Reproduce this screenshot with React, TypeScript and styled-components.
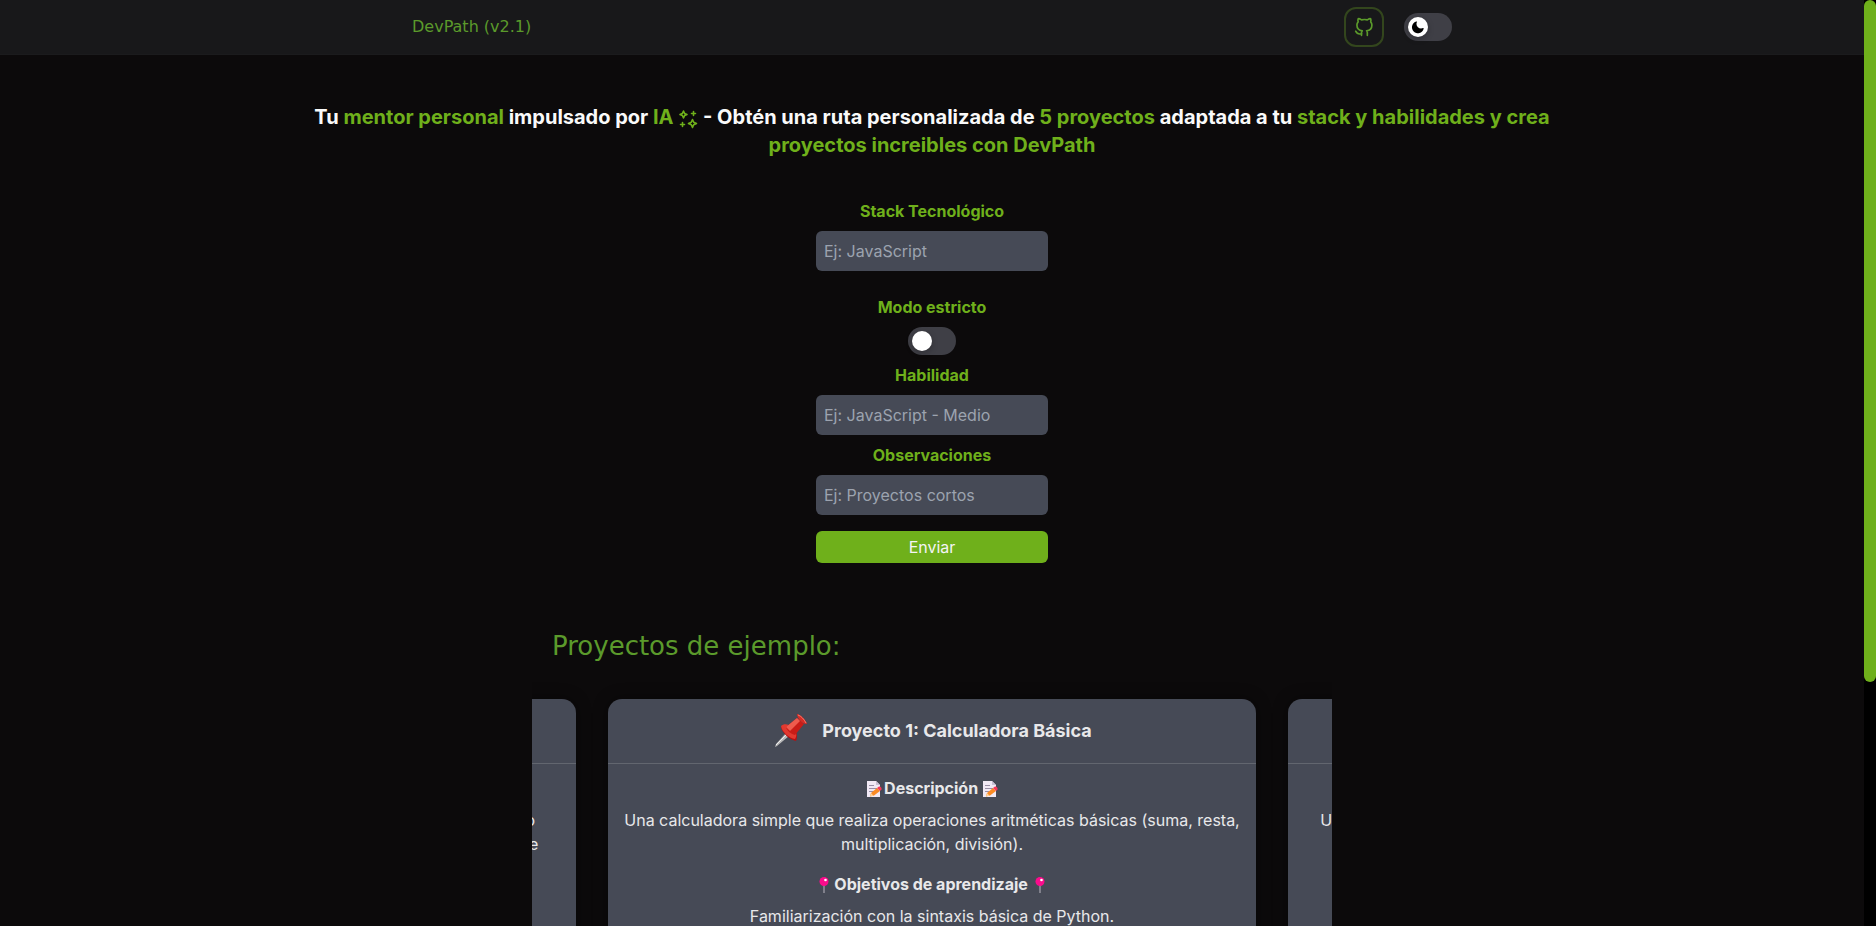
import React from "react";
import styled, { createGlobalStyle } from "styled-components";

const green = "#6fb01b";
const brand = "#5b9a2b";
const slate = "#464a56";

const Global = createGlobalStyle`
  *, *::before, *::after { box-sizing: border-box; }
  html { background: #0c0a0b; }
  body {
    margin: 0;
    height: 100vh;
    background: #0c0a0b;
    color: #fafafa;
    font-family: Inter, "Liberation Sans", sans-serif;
    font-size: 16px;
    line-height: 24px;
  }
  h1, h2, h3, h4, p { margin: 0; }
  button, input { font: inherit; }
`;

const Shell = styled.div`
  display: flex;
  height: 100vh;
  overflow: hidden;
`;

const Page = styled.div`
  flex: 1;
  min-width: 0;
  overflow: hidden;
`;

const ScrollTrack = styled.div`
  flex: none;
  width: 12px;
  background: #000;
`;

const ScrollThumb = styled.div`
  height: 73.6%;
  border-radius: 6px;
  background: ${green};
`;

const Header = styled.header`
  background: #18181a;
  border-bottom: 1px solid #1b1b1d;
`;

const Bar = styled.div`
  display: flex;
  align-items: center;
  justify-content: space-between;
  height: 54px;
  max-width: 1040px;
  margin: 0 auto;
`;

const Brand = styled.a`
  color: ${brand};
  font-family: "DejaVu Sans", sans-serif;
  font-size: 16px;
  font-weight: 400;
  text-decoration: none;
`;

const Actions = styled.div`
  display: flex;
  align-items: center;
  gap: 20px;
`;

const IconLink = styled.a`
  display: flex;
  align-items: center;
  justify-content: center;
  width: 40px;
  height: 40px;
  border: 2px solid #33461d;
  border-radius: 12px;
  color: ${brand};
`;

const Toggle = styled.label`
  display: flex;
  align-items: center;
  width: 48px;
  height: 28px;
  padding: 0 4px;
  border-radius: 14px;
  background: #3f3f46;
  cursor: pointer;

  input {
    position: absolute;
    opacity: 0;
    width: 1px;
    height: 1px;
    margin: 0;
  }
`;

const Knob = styled.span`
  display: flex;
  align-items: center;
  justify-content: center;
  width: 20px;
  height: 20px;
  border-radius: 50%;
  background: #fff;
  color: #000;
  box-shadow: 0 2px 6px rgba(0, 0, 0, 0.25);

  input:checked + & {
    margin-left: auto;
  }
`;

const Main = styled.main`
  display: flex;
  flex-direction: column;
  align-items: center;
`;

const Headline = styled.h1`
  max-width: 1280px;
  padding: 48px 16px 0;
  text-align: center;
  font-size: 20px;
  line-height: 28px;
  font-weight: 700;

  em {
    color: ${green};
    font-style: normal;
  }

  svg {
    vertical-align: -5px;
  }
`;

const Form = styled.form`
  display: flex;
  flex-direction: column;
  align-items: center;
  width: 232px;
  padding-top: 40px;
`;

const Field = styled.div<{ $after?: number }>`
  display: flex;
  flex-direction: column;
  align-items: center;
  gap: 8px;
  width: 100%;
  margin-bottom: ${(p) => p.$after ?? 8}px;
`;

const Label = styled.label`
  color: ${green};
  font-weight: 700;
`;

const Input = styled.input`
  width: 100%;
  height: 40px;
  padding: 0 8px;
  border: 0;
  border-radius: 6px;
  background: ${slate};
  color: #fafafa;

  &::placeholder {
    color: #9ca3af;
    opacity: 1;
  }
`;

const Submit = styled.button`
  width: 100%;
  height: 32px;
  padding: 0;
  border: 0;
  border-radius: 6px;
  background: ${green};
  color: #f4f4f5;
`;

const Examples = styled.section`
  width: 800px;
  max-width: 100%;
  padding-top: 64px;
`;

const SectionTitle = styled.h2`
  padding: 0 20px;
  color: ${brand};
  font-family: "DejaVu Sans", sans-serif;
  font-size: 26px;
  line-height: 38px;
  font-weight: 400;
`;

const Carousel = styled.div`
  display: flex;
  justify-content: center;
  gap: 32px;
  padding-top: 34px;
  overflow: hidden;
`;

const Card = styled.article`
  flex: none;
  width: 648px;
  min-height: 420px;
  border-radius: 14px;
  background: ${slate};
  color: #e8e8ea;
  text-align: center;
  box-shadow: 0 0 15px rgba(0, 0, 0, 0.4);
`;

const CardHeader = styled.header`
  display: flex;
  align-items: center;
  justify-content: center;
  gap: 14px;
  height: 65px;
  border-bottom: 1px solid #62666f;
`;

const CardTitle = styled.h3`
  font-size: 18px;
  line-height: 28px;
  font-weight: 700;
`;

const CardBody = styled.div`
  display: flex;
  flex-direction: column;
  gap: 8px;
  padding: 12px;
`;

const Heading = styled.h4<{ $spaced?: boolean }>`
  font-size: 16px;
  font-weight: 700;
  padding-top: ${(p) => (p.$spaced ? 8 : 0)}px;

  svg {
    vertical-align: -3px;
  }

  svg:first-child {
    margin-right: 2px;
  }
`;

function Github() {
  return (
    <svg width="20" height="20" viewBox="0 0 24 24" fill="none" stroke="currentColor" strokeWidth="2" strokeLinecap="round" strokeLinejoin="round" aria-hidden="true">
      <path d="M16 22.030V19.160C16.040 18.680 15.970 18.200 15.810 17.750 15.650 17.300 15.390 16.890 15.060 16.550 18.200 16.200 21.500 15.010 21.500 9.550 21.500 8.150 20.960 6.810 20 5.800 20.460 4.580 20.420 3.230 19.910 2.030 19.910 2.030 18.730 1.680 16 3.510 13.710 2.890 11.290 2.890 9 3.510 6.270 1.680 5.090 2.030 5.090 2.030 4.580 3.230 4.540 4.580 5 5.800 4.030 6.820 3.490 8.170 3.500 9.580 3.500 15 6.800 16.190 9.940 16.580 9.610 16.920 9.360 17.320 9.200 17.770 9.030 18.210 8.970 18.680 9 19.160V22.030" />
      <path d="M9 20.030C6 21 3.500 20.030 2 17.030" />
    </svg>
  );
}

function Moon() {
  return (
    <svg width="14" height="14" viewBox="0 0 24 24" fill="currentColor" aria-hidden="true">
      <path d="M21.500 14.100a.7.7 0 0 0-.800-.2 8 8 0 0 1-10.600-10.400.7.7 0 0 0-.900-1A10.200 10.200 0 1 0 21.700 15a.7.7 0 0 0-.2-.9z" />
    </svg>
  );
}

function Sparkles() {
  return (
    <svg width="20" height="20" viewBox="0 0 20 20" fill="none" stroke={green} strokeWidth="1.600" strokeLinejoin="round" strokeLinecap="round" aria-hidden="true">
      <path d="M5.500 2 6.600 4.400 9 5.500 6.600 6.600 5.500 9 4.400 6.600 2 5.500 4.400 4.400z" />
      <path d="M14.500 10.500 15.700 13.300 18.500 14.500 15.700 15.700 14.500 18.500 13.300 15.700 10.500 14.500 13.300 13.300z" />
      <path d="M15.500 2.500v4M13.500 4.500h4M4.500 13.500v4M2.500 15.500h4" />
    </svg>
  );
}

function Pushpin() {
  return (
    <svg width="36" height="36" viewBox="0 0 36 36" aria-hidden="true">
      <path d="M3 34 4 31 14 20 17 23 5 33z" fill="#b9b9b9" />
      <path d="M4 32 15 21" stroke="#eee" strokeWidth="1" />
      <path d="M9 14c4-3 9-2 12 1 4 3 5 8 3 13-6-1-14-8-15-14z" fill="#b80f12" />
      <path d="M9 13c3-3 8-2 12 2s4 8 2 11c-6-1-13-7-14-13z" fill="#e2392f" />
      <path d="M14 14 25 5 32 11 23 22c-4-1-8-4-9-8z" fill="#c91c17" />
      <path d="M14 14 25 5 28 8 18 18z" fill="#ee5b4d" />
      <path d="M25 1c3 0 9 6 10 10-3 1-10-5-10-10z" fill="#d92b24" />
      <path d="M26 2c3 1 6 4 8 8" stroke="#f27a6d" strokeWidth="1" fill="none" />
    </svg>
  );
}

function Memo() {
  return (
    <svg width="16" height="16" viewBox="0 0 16 16" aria-hidden="true">
      <path d="M1 0h9l4 4v12H1z" fill="#f1e9f5" />
      <path d="M10 0v4h4z" fill="#c9bfd4" />
      <path d="M3 4.500h5M3 7.500h8M3 10.500h5" stroke="#998ea6" strokeWidth="1" />
      <path d="M4 15.500 5 12 11 7 14 10 8 14.500z" fill="#fb8b24" />
      <path d="M4 15.500 5 12 7.500 14.800z" fill="#ffd29b" />
      <path d="M11 7 13 5.500C14.500 5 16 7 15.500 8.500L14 10z" fill="#f8385c" />
    </svg>
  );
}

function RoundPin() {
  return (
    <svg width="16" height="16" viewBox="0 0 16 16" aria-hidden="true">
      <path d="M7.500 8h1v8h-1z" fill="#b9b6bf" />
      <circle cx="8" cy="4.500" r="4.500" fill="#fb0b8c" />
      <circle cx="9.500" cy="3" r="1.300" fill="#fff" />
    </svg>
  );
}

type Project = { title: string; description: string; goals: string };

const projects: Project[] = [
  {
    title: "Proyecto 3: Lista de Tareas",
    description:
      "Una aplicación de consola que permite agregar y marcar tareas guardando automáticamente la lista en un archivo de texto local que después se puede recuperar.",
    goals: "Manejo de archivos y listas en Python.",
  },
  {
    title: "Proyecto 1: Calculadora Básica",
    description:
      "Una calculadora simple que realiza operaciones aritméticas básicas (suma, resta, multiplicación, división).",
    goals: "Familiarización con la sintaxis básica de Python.",
  },
  {
    title: "Proyecto 2: Adivina el Número",
    description: "Un juego donde cada usuario intenta adivinar un número generado al azar en Python.",
    goals: "Uso de bucles y condicionales.",
  },
];

function ProjectCard({ project }: { project: Project }) {
  return (
    <Card>
      <CardHeader>
        <Pushpin />
        <CardTitle>{project.title}</CardTitle>
      </CardHeader>
      <CardBody>
        <Heading><Memo />Descripción <Memo /></Heading>
        <p>{project.description}</p>
        <Heading $spaced><RoundPin />Objetivos de aprendizaje <RoundPin /></Heading>
        <p>{project.goals}</p>
      </CardBody>
    </Card>
  );
}

export default function App() {
  return (
    <>
      <Global />
      <Shell>
        <Page>
          <Header>
            <Bar>
              <Brand href="#">DevPath (v2.1)</Brand>
              <Actions>
                <IconLink href="#" aria-label="GitHub"><Github /></IconLink>
                <Toggle>
                  <input type="checkbox" role="switch" aria-label="Tema" />
                  <Knob><Moon /></Knob>
                </Toggle>
              </Actions>
            </Bar>
          </Header>
          <Main>
            <Headline>
              Tu <em>mentor personal</em> impulsado por <em>IA <Sparkles /></em> - Obtén una ruta
              personalizada de <em>5 proyectos</em> adaptada a tu{" "}
              <em>stack y habilidades y crea proyectos increibles con DevPath</em>
            </Headline>
            <Form onSubmit={(e) => e.preventDefault()}>
              <Field $after={24}>
                <Label htmlFor="stack">Stack Tecnológico</Label>
                <Input id="stack" placeholder="Ej: JavaScript" />
              </Field>
              <Field>
                <Label htmlFor="strict">Modo estricto</Label>
                <Toggle>
                  <input id="strict" type="checkbox" role="switch" />
                  <Knob />
                </Toggle>
              </Field>
              <Field>
                <Label htmlFor="skill">Habilidad</Label>
                <Input id="skill" placeholder="Ej: JavaScript - Medio" />
              </Field>
              <Field $after={16}>
                <Label htmlFor="notes">Observaciones</Label>
                <Input id="notes" placeholder="Ej: Proyectos cortos" />
              </Field>
              <Submit type="submit">Enviar</Submit>
            </Form>
            <Examples>
              <SectionTitle>Proyectos de ejemplo:</SectionTitle>
              <Carousel>
                {projects.map((p) => <ProjectCard key={p.title} project={p} />)}
              </Carousel>
            </Examples>
          </Main>
        </Page>
        <ScrollTrack><ScrollThumb /></ScrollTrack>
      </Shell>
    </>
  );
}
